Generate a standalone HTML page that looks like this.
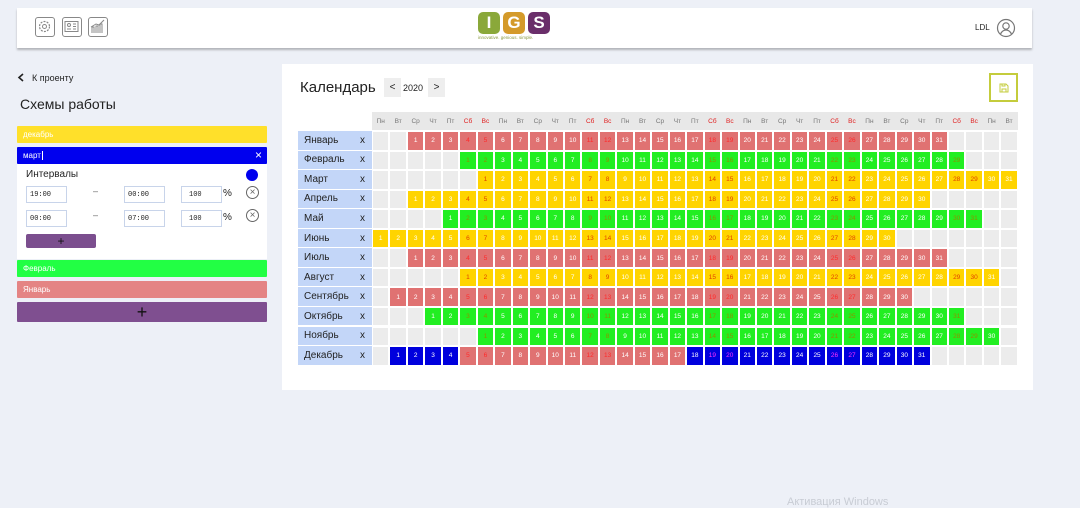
<!DOCTYPE html>
<html><head><meta charset="utf-8"><style>
*{box-sizing:border-box;margin:0;padding:0}
body{width:1080px;height:504px;background:#edf0f7;font-family:"Liberation Sans","DejaVu Sans",sans-serif;position:relative;overflow:hidden;color:#222}
.abs{position:absolute}
.hdr{left:17px;top:8px;width:1015px;height:40px;background:#fff;box-shadow:0 2px 2px rgba(0,0,0,.25)}
.ic{position:absolute;top:9px;width:20px;height:20px;border:1.5px solid #888;border-radius:3px}
.panel{left:282px;top:64px;width:751px;height:326px;background:#fff}
.bar{position:absolute;left:17px;width:250px;height:17px;font-size:8px;color:#fff;padding:4px 6px;border-radius:1px}
.inp{position:absolute;height:17px;border:1.5px solid #c8d4ea;font-family:"Liberation Mono",monospace;font-size:7px;padding:4px 3px;background:#fff}
.grid{position:absolute;left:298px;display:grid;grid-template-columns:74px repeat(37,17.46px)}
.grid i{font-style:normal;height:19.55px;border:1px solid #fff;background:#ececec;font-size:6.5px;color:#fff;display:flex;align-items:center;justify-content:center}
.grid b{font-weight:normal;height:19.55px;background:#c3d6f8;border-bottom:1px solid #fff;font-size:10px;color:#222;display:flex;align-items:center;padding-left:6px;position:relative}
.grid b:after{content:"x";position:absolute;left:62px;font-size:10px}
.grid .r{background:#e07272}.grid .g{background:#22ee22}.grid .y{background:#ffd400}.grid .b{background:#0000dd}
.grid>.r:nth-child(7n+7),.grid>.r:nth-child(7n+8){color:#ff2a2a}
.grid>.g:nth-child(7n+7),.grid>.g:nth-child(7n+8){color:#909000}
.grid>.y:nth-child(7n+7),.grid>.y:nth-child(7n+8){color:#e04000}
.grid>.b:nth-child(7n+7),.grid>.b:nth-child(7n+8){color:#ff30ff}
.hd{position:absolute;left:372px;top:112px;width:646px;height:18px;background:#e8e8e8;display:grid;grid-template-columns:repeat(37,17.46px)}
.hd span{font-size:6.5px;color:#777;display:flex;align-items:center;justify-content:center}
.hd span:nth-child(7n+6),.hd span:nth-child(7n+7){color:#e02020}
.lg{position:absolute;top:0;width:22px;height:22px;border-radius:5px;color:#fff;font-weight:bold;font-size:17px;line-height:22px;text-align:center}
</style></head><body>
<div class="abs hdr">
 <div class="ic" style="left:18px"><svg width="17" height="17" viewBox="0 0 17 17"><circle cx="8.5" cy="8.5" r="5" fill="none" stroke="#888" stroke-width="1.2" stroke-dasharray="2 1.2"/><circle cx="8.5" cy="8.5" r="2" fill="none" stroke="#888"/></svg></div>
 <div class="ic" style="left:45px"><svg width="17" height="17" viewBox="0 0 17 17"><rect x="2" y="3.5" width="13" height="10" fill="none" stroke="#888"/><circle cx="6" cy="7" r="1.5" fill="none" stroke="#888"/><path d="M4 11h4M10 6h3M10 8.5h3M10 11h3" stroke="#888"/></svg></div>
 <div class="ic" style="left:71px"><svg width="17" height="17" viewBox="0 0 17 17"><path d="M3 15V9h2v6M7 15V8h2v7M11 15V6h2v9M2 9l5-3 3 1 5-5" fill="none" stroke="#888"/></svg></div>
 <div class="abs" style="left:461px;top:4px;width:72px;height:22px">
  <div class="lg" style="left:0;background:#8aa83a">I</div>
  <div class="lg" style="left:25px;background:#d49a2a">G</div>
  <div class="lg" style="left:50px;background:#6a2e6a">S</div>
 </div>
 <div class="abs" style="left:461px;top:27px;font-size:4.5px;color:#8a9a40">innovative. genious. simple.</div>
 <div class="abs" style="left:958px;top:15px;font-size:8px">LDL</div>
 <svg class="abs" style="left:979px;top:10px" width="20" height="20" viewBox="0 0 20 20"><circle cx="10" cy="10" r="8.5" fill="none" stroke="#777" stroke-width="1.2"/><circle cx="10" cy="8" r="3.2" fill="none" stroke="#777" stroke-width="1.2"/><path d="M4.5 16c1.5-3 3-4 5.5-4s4 1 5.5 4" fill="none" stroke="#777" stroke-width="1.2"/></svg>
</div>

<svg class="abs" style="left:17px;top:73px" width="8" height="9"><path d="M6 1L2 4.5 6 8" fill="none" stroke="#222" stroke-width="1.6"/></svg>
<div class="abs" style="left:32px;top:73px;font-size:9px">К проенту</div>
<div class="abs" style="left:20px;top:96px;font-size:14px">Схемы работы</div>
<div class="bar" style="top:126px;background:#ffe02a">декабрь</div>
<div class="bar" style="top:147px;background:#0000ee">март<span style="border-left:1px solid #fff;margin-left:1px"></span><span style="position:absolute;right:5px;top:1px;font-size:12px">×</span></div>
<div class="abs" style="left:17px;top:164px;width:250px;height:95px;background:#fff"></div>
<div class="abs" style="left:26px;top:169px;font-size:10px">Интервалы</div>
<div class="abs" style="left:246px;top:169px;width:12px;height:12px;border-radius:50%;background:#0000ee"></div>
<div class="inp" style="left:26px;top:186px;width:41px">19:00</div>
<div class="abs" style="left:93px;top:186px;font-size:9px;color:#666">–</div>
<div class="inp" style="left:124px;top:186px;width:41px">00:00</div>
<div class="inp" style="left:181px;top:186px;width:41px;padding-left:7px">100</div>
<div class="abs" style="left:223px;top:188px;font-size:10px">%</div>
<div class="abs" style="left:246px;top:186px;width:13px;height:13px;border:1px solid #666;border-radius:50%;font-size:10px;line-height:11px;text-align:center;color:#666">×</div>
<div class="inp" style="left:26px;top:210px;width:41px">00:00</div>
<div class="abs" style="left:93px;top:210px;font-size:9px;color:#666">–</div>
<div class="inp" style="left:124px;top:210px;width:41px">07:00</div>
<div class="inp" style="left:181px;top:210px;width:41px;padding-left:7px">100</div>
<div class="abs" style="left:223px;top:212px;font-size:10px">%</div>
<div class="abs" style="left:246px;top:209px;width:13px;height:13px;border:1px solid #666;border-radius:50%;font-size:10px;line-height:11px;text-align:center;color:#666">×</div>
<div class="abs" style="left:26px;top:234px;width:70px;height:14px;background:#7b4e8e;border-radius:2px;text-align:center;font-size:12px;line-height:14px;color:#111">+</div>
<div class="bar" style="top:260px;background:#22ff44">Февраль</div>
<div class="bar" style="top:281px;background:#e48484">Январь</div>
<div class="bar" style="top:302px;height:20px;background:#7f4f90;text-align:center;font-size:18px;line-height:12px;color:#111">+</div>

<div class="abs panel"></div>
<div class="abs" style="left:300px;top:79px;font-size:15px">Календарь</div>
<div class="abs" style="left:384px;top:78px;width:17px;height:19px;background:#eee;font-size:10px;text-align:center;line-height:19px">&lt;</div>
<div class="abs" style="left:403px;top:83px;font-size:9px">2020</div>
<div class="abs" style="left:428px;top:78px;width:17px;height:19px;background:#eee;font-size:10px;text-align:center;line-height:19px">&gt;</div>
<div class="abs" style="left:989px;top:73px;width:29px;height:29px;border:2px solid #c4cc3c"><svg style="position:absolute;left:8px;top:8px" width="10" height="10"><path d="M1 1h6l2 2v6H1z M3 1v2h3V1M3 9V6h4v3" fill="none" stroke="#c4cc3c"/></svg></div>

<div class="hd"><span>Пн</span><span>Вт</span><span>Ср</span><span>Чт</span><span>Пт</span><span>Сб</span><span>Вс</span><span>Пн</span><span>Вт</span><span>Ср</span><span>Чт</span><span>Пт</span><span>Сб</span><span>Вс</span><span>Пн</span><span>Вт</span><span>Ср</span><span>Чт</span><span>Пт</span><span>Сб</span><span>Вс</span><span>Пн</span><span>Вт</span><span>Ср</span><span>Чт</span><span>Пт</span><span>Сб</span><span>Вс</span><span>Пн</span><span>Вт</span><span>Ср</span><span>Чт</span><span>Пт</span><span>Сб</span><span>Вс</span><span>Пн</span><span>Вт</span></div>

<div class="grid" style="top:131px">
<b>Январь</b><i></i><i></i><i class=r>1</i><i class=r>2</i><i class=r>3</i><i class=r>4</i><i class=r>5</i><i class=r>6</i><i class=r>7</i><i class=r>8</i><i class=r>9</i><i class=r>10</i><i class=r>11</i><i class=r>12</i><i class=r>13</i><i class=r>14</i><i class=r>15</i><i class=r>16</i><i class=r>17</i><i class=r>18</i><i class=r>19</i><i class=r>20</i><i class=r>21</i><i class=r>22</i><i class=r>23</i><i class=r>24</i><i class=r>25</i><i class=r>26</i><i class=r>27</i><i class=r>28</i><i class=r>29</i><i class=r>30</i><i class=r>31</i><i></i><i></i><i></i><i></i>
</div>
<div class="grid" style="top:150.55px">
<b>Февраль</b><i></i><i></i><i></i><i></i><i></i><i class=g>1</i><i class=g>2</i><i class=g>3</i><i class=g>4</i><i class=g>5</i><i class=g>6</i><i class=g>7</i><i class=g>8</i><i class=g>9</i><i class=g>10</i><i class=g>11</i><i class=g>12</i><i class=g>13</i><i class=g>14</i><i class=g>15</i><i class=g>16</i><i class=g>17</i><i class=g>18</i><i class=g>19</i><i class=g>20</i><i class=g>21</i><i class=g>22</i><i class=g>23</i><i class=g>24</i><i class=g>25</i><i class=g>26</i><i class=g>27</i><i class=g>28</i><i class=g>29</i><i></i><i></i><i></i>
</div>
<div class="grid" style="top:170.1px">
<b>Март</b><i></i><i></i><i></i><i></i><i></i><i></i><i class=y>1</i><i class=y>2</i><i class=y>3</i><i class=y>4</i><i class=y>5</i><i class=y>6</i><i class=y>7</i><i class=y>8</i><i class=y>9</i><i class=y>10</i><i class=y>11</i><i class=y>12</i><i class=y>13</i><i class=y>14</i><i class=y>15</i><i class=y>16</i><i class=y>17</i><i class=y>18</i><i class=y>19</i><i class=y>20</i><i class=y>21</i><i class=y>22</i><i class=y>23</i><i class=y>24</i><i class=y>25</i><i class=y>26</i><i class=y>27</i><i class=y>28</i><i class=y>29</i><i class=y>30</i><i class=y>31</i>
</div>
<div class="grid" style="top:189.65px">
<b>Апрель</b><i></i><i></i><i class=y>1</i><i class=y>2</i><i class=y>3</i><i class=y>4</i><i class=y>5</i><i class=y>6</i><i class=y>7</i><i class=y>8</i><i class=y>9</i><i class=y>10</i><i class=y>11</i><i class=y>12</i><i class=y>13</i><i class=y>14</i><i class=y>15</i><i class=y>16</i><i class=y>17</i><i class=y>18</i><i class=y>19</i><i class=y>20</i><i class=y>21</i><i class=y>22</i><i class=y>23</i><i class=y>24</i><i class=y>25</i><i class=y>26</i><i class=y>27</i><i class=y>28</i><i class=y>29</i><i class=y>30</i><i></i><i></i><i></i><i></i><i></i>
</div>
<div class="grid" style="top:209.2px">
<b>Май</b><i></i><i></i><i></i><i></i><i class=g>1</i><i class=g>2</i><i class=g>3</i><i class=g>4</i><i class=g>5</i><i class=g>6</i><i class=g>7</i><i class=g>8</i><i class=g>9</i><i class=g>10</i><i class=g>11</i><i class=g>12</i><i class=g>13</i><i class=g>14</i><i class=g>15</i><i class=g>16</i><i class=g>17</i><i class=g>18</i><i class=g>19</i><i class=g>20</i><i class=g>21</i><i class=g>22</i><i class=g>23</i><i class=g>24</i><i class=g>25</i><i class=g>26</i><i class=g>27</i><i class=g>28</i><i class=g>29</i><i class=g>30</i><i class=g>31</i><i></i><i></i>
</div>
<div class="grid" style="top:228.75px">
<b>Июнь</b><i class=y>1</i><i class=y>2</i><i class=y>3</i><i class=y>4</i><i class=y>5</i><i class=y>6</i><i class=y>7</i><i class=y>8</i><i class=y>9</i><i class=y>10</i><i class=y>11</i><i class=y>12</i><i class=y>13</i><i class=y>14</i><i class=y>15</i><i class=y>16</i><i class=y>17</i><i class=y>18</i><i class=y>19</i><i class=y>20</i><i class=y>21</i><i class=y>22</i><i class=y>23</i><i class=y>24</i><i class=y>25</i><i class=y>26</i><i class=y>27</i><i class=y>28</i><i class=y>29</i><i class=y>30</i><i></i><i></i><i></i><i></i><i></i><i></i><i></i>
</div>
<div class="grid" style="top:248.3px">
<b>Июль</b><i></i><i></i><i class=r>1</i><i class=r>2</i><i class=r>3</i><i class=r>4</i><i class=r>5</i><i class=r>6</i><i class=r>7</i><i class=r>8</i><i class=r>9</i><i class=r>10</i><i class=r>11</i><i class=r>12</i><i class=r>13</i><i class=r>14</i><i class=r>15</i><i class=r>16</i><i class=r>17</i><i class=r>18</i><i class=r>19</i><i class=r>20</i><i class=r>21</i><i class=r>22</i><i class=r>23</i><i class=r>24</i><i class=r>25</i><i class=r>26</i><i class=r>27</i><i class=r>28</i><i class=r>29</i><i class=r>30</i><i class=r>31</i><i></i><i></i><i></i><i></i>
</div>
<div class="grid" style="top:267.85px">
<b>Август</b><i></i><i></i><i></i><i></i><i></i><i class=y>1</i><i class=y>2</i><i class=y>3</i><i class=y>4</i><i class=y>5</i><i class=y>6</i><i class=y>7</i><i class=y>8</i><i class=y>9</i><i class=y>10</i><i class=y>11</i><i class=y>12</i><i class=y>13</i><i class=y>14</i><i class=y>15</i><i class=y>16</i><i class=y>17</i><i class=y>18</i><i class=y>19</i><i class=y>20</i><i class=y>21</i><i class=y>22</i><i class=y>23</i><i class=y>24</i><i class=y>25</i><i class=y>26</i><i class=y>27</i><i class=y>28</i><i class=y>29</i><i class=y>30</i><i class=y>31</i><i></i>
</div>
<div class="grid" style="top:287.4px">
<b>Сентябрь</b><i></i><i class=r>1</i><i class=r>2</i><i class=r>3</i><i class=r>4</i><i class=r>5</i><i class=r>6</i><i class=r>7</i><i class=r>8</i><i class=r>9</i><i class=r>10</i><i class=r>11</i><i class=r>12</i><i class=r>13</i><i class=r>14</i><i class=r>15</i><i class=r>16</i><i class=r>17</i><i class=r>18</i><i class=r>19</i><i class=r>20</i><i class=r>21</i><i class=r>22</i><i class=r>23</i><i class=r>24</i><i class=r>25</i><i class=r>26</i><i class=r>27</i><i class=r>28</i><i class=r>29</i><i class=r>30</i><i></i><i></i><i></i><i></i><i></i><i></i>
</div>
<div class="grid" style="top:306.95px">
<b>Октябрь</b><i></i><i></i><i></i><i class=g>1</i><i class=g>2</i><i class=g>3</i><i class=g>4</i><i class=g>5</i><i class=g>6</i><i class=g>7</i><i class=g>8</i><i class=g>9</i><i class=g>10</i><i class=g>11</i><i class=g>12</i><i class=g>13</i><i class=g>14</i><i class=g>15</i><i class=g>16</i><i class=g>17</i><i class=g>18</i><i class=g>19</i><i class=g>20</i><i class=g>21</i><i class=g>22</i><i class=g>23</i><i class=g>24</i><i class=g>25</i><i class=g>26</i><i class=g>27</i><i class=g>28</i><i class=g>29</i><i class=g>30</i><i class=g>31</i><i></i><i></i><i></i>
</div>
<div class="grid" style="top:326.5px">
<b>Ноябрь</b><i></i><i></i><i></i><i></i><i></i><i></i><i class=g>1</i><i class=g>2</i><i class=g>3</i><i class=g>4</i><i class=g>5</i><i class=g>6</i><i class=g>7</i><i class=g>8</i><i class=g>9</i><i class=g>10</i><i class=g>11</i><i class=g>12</i><i class=g>13</i><i class=g>14</i><i class=g>15</i><i class=g>16</i><i class=g>17</i><i class=g>18</i><i class=g>19</i><i class=g>20</i><i class=g>21</i><i class=g>22</i><i class=g>23</i><i class=g>24</i><i class=g>25</i><i class=g>26</i><i class=g>27</i><i class=g>28</i><i class=g>29</i><i class=g>30</i><i></i>
</div>
<div class="grid" style="top:346.05px">
<b>Декабрь</b><i></i><i class=b>1</i><i class=b>2</i><i class=b>3</i><i class=b>4</i><i class=r>5</i><i class=r>6</i><i class=r>7</i><i class=r>8</i><i class=r>9</i><i class=r>10</i><i class=r>11</i><i class=r>12</i><i class=r>13</i><i class=r>14</i><i class=r>15</i><i class=r>16</i><i class=r>17</i><i class=b>18</i><i class=b>19</i><i class=b>20</i><i class=b>21</i><i class=b>22</i><i class=b>23</i><i class=b>24</i><i class=b>25</i><i class=b>26</i><i class=b>27</i><i class=b>28</i><i class=b>29</i><i class=b>30</i><i class=b>31</i><i></i><i></i><i></i><i></i><i></i>
</div>

<div class="abs" style="left:787px;top:496px;font-size:11px;color:#c8ccd4">Активация Windows</div>
</body></html>
